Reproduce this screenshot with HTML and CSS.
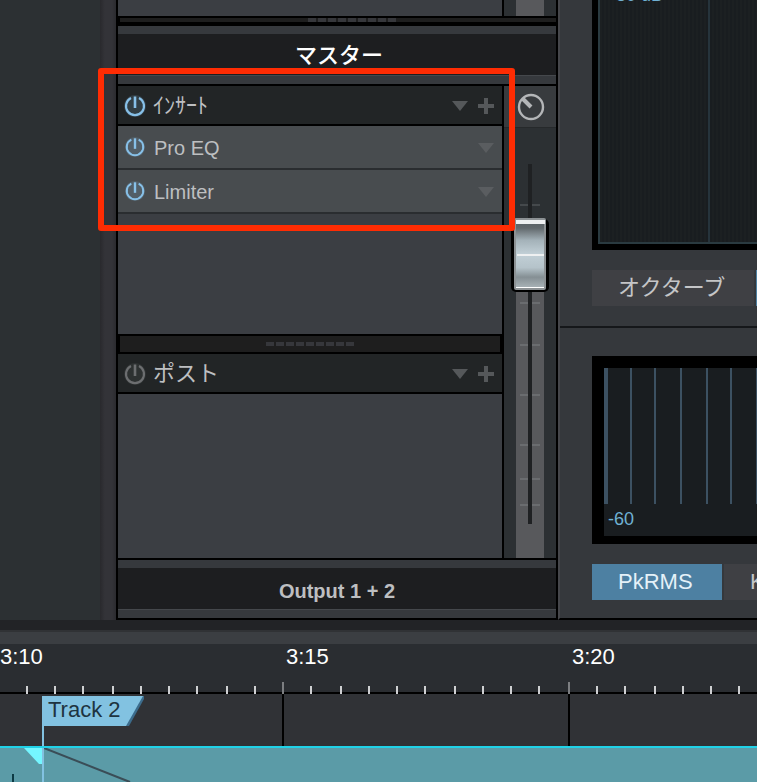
FILE: index.html
```html
<!DOCTYPE html>
<html lang="ja">
<head>
<meta charset="utf-8">
<title>マスター</title>
<link rel="stylesheet" href="styles.css">
</head>
<body>
<svg class="defs" aria-hidden="true">
  <symbol id="power" viewBox="0 0 24 24">
    <circle cx="12" cy="12" r="11" fill="currentColor" opacity=".16"/>
    <path d="M8 4A9 9 0 1 0 16 4" fill="none" stroke="currentColor" stroke-width="2.200"/>
    <path d="M12 2.500V14" fill="none" stroke="currentColor" stroke-width="2.600"/>
  </symbol>
  <symbol id="arrow" viewBox="0 0 16 10"><path d="M0 0H16L8 10Z" fill="currentColor"/></symbol>
  <symbol id="plus" viewBox="0 0 16 16"><path d="M6 0H10V6H16V10H10V16H6V10H0V6H6Z" fill="currentColor"/></symbol>
  <symbol id="grip" viewBox="0 0 88 4"><path d="M0 2H88" fill="none" stroke="currentColor" stroke-width="4" stroke-dasharray="8 2"/></symbol>
</svg>
<div class="app">
  <main class="mixer">
    <div class="gutter"></div>
    <div class="edge"></div>
    <section class="channel">
      <div class="stub"><div class="stub-list"></div><div class="stub-meter"></div></div>
      <div class="splitter thin"><svg class="grip"><use href="#grip"/></svg></div>
      <h1 class="name title">マスター</h1>
      <div class="strip">
        <div class="racks">
          <div class="rack-head">
            <button class="icon on" aria-label="ｲﾝｻｰﾄ"><svg class="power"><use href="#power"/></svg></button>
            <h2>ｲﾝｻｰﾄ</h2>
            <button class="icon dim" aria-label="▼"><svg class="arrow"><use href="#arrow"/></svg></button>
            <button class="icon dim" aria-label="+"><svg class="plus"><use href="#plus"/></svg></button>
          </div>
          <ul class="slots">
            <li><button class="icon on" aria-label="Pro EQ"><svg class="power small"><use href="#power"/></svg></button><span>Pro EQ</span><button class="icon faint" aria-label="▼"><svg class="arrow"><use href="#arrow"/></svg></button></li>
            <li><button class="icon on" aria-label="Limiter"><svg class="power small"><use href="#power"/></svg></button><span>Limiter</span><button class="icon faint" aria-label="▼"><svg class="arrow"><use href="#arrow"/></svg></button></li>
          </ul>
          <div class="space"></div>
          <div class="splitter"><svg class="grip"><use href="#grip"/></svg></div>
          <div class="rack-head">
            <button class="icon off" aria-label="ポスト"><svg class="power"><use href="#power"/></svg></button>
            <h2>ポスト</h2>
            <button class="icon dim" aria-label="▼"><svg class="arrow"><use href="#arrow"/></svg></button>
            <button class="icon dim" aria-label="+"><svg class="plus"><use href="#plus"/></svg></button>
          </div>
          <div class="space tall"></div>
        </div>
        <div class="fader-col">
          <div class="pan"><svg width="28" height="28" viewBox="0 0 28 28"><circle cx="14" cy="14" r="12" fill="none" stroke="#b4b6b8" stroke-width="2.400"/><path d="M6 6L14 14" stroke="#b4b6b8" stroke-width="4"/></svg></div>
          <svg class="fader" width="52" height="430" viewBox="0 0 52 430">
            <defs>
              <linearGradient id="cap" x1="0" y1="0" x2="0" y2="1">
                <stop offset="0" stop-color="#555e62"/><stop offset=".12" stop-color="#62696d"/><stop offset=".3" stop-color="#a4b2b9"/>
                <stop offset=".5" stop-color="#c1cfd6"/><stop offset=".7" stop-color="#b5c3ca"/><stop offset=".84" stop-color="#858f94"/><stop offset="1" stop-color="#aab4b8"/>
              </linearGradient>
            </defs>
            <rect x="12" y="162" width="28" height="268" fill="#58595c"/>
            <rect x="24" y="36" width="4" height="360" fill="#1f2123"/>
            <g fill="#6a6c6f">
              <path d="M16 76h8v2h-8zM28 76h8v2h-8z" fill="#45494c"/>
              <path d="M16 174h8v2h-8zM28 174h8v2h-8zM16 216h8v2h-8zM28 216h8v2h-8zM16 266h8v2h-8zM28 266h8v2h-8zM16 316h8v2h-8zM28 316h8v2h-8zM16 350h8v2h-8zM28 350h8v2h-8zM16 376h8v2h-8zM28 376h8v2h-8z"/>
            </g>
            <rect x="7" y="91" width="38" height="73" rx="5" fill="#000"/>
            <rect x="10" y="90" width="32" height="72" rx="2" fill="#8c9194"/>
            <rect x="12" y="92" width="28" height="68" fill="url(#cap)"/>
            <path d="M12 92H41V96H12ZM13 126H40V128H13Z" fill="#eef0f1"/>
            <path d="M12 159H40V160H12Z" fill="#fff"/>
          </svg>
        </div>
        <div class="highlight"></div>
      </div>
      <div class="name output">Output 1 + 2</div>
    </section>
    <aside class="analysis">
      <div class="panel spectrum">
        <div class="screen grid"><span class="scale">-80 dB</span></div>
        <div class="tabs"><button class="tab wide">オクターブ</button><button class="tab active"></button></div>
      </div>
      <div class="panel level">
        <div class="screen bars">
          <svg class="lines" height="136"><path d="M0 0h4v136h-4zM26 0h2v136h-2zM50 0h2v136h-2zM76 0h2v136h-2zM102 0h2v136h-2zM126 0h2v136h-2zM152 0h2v136h-2z" fill="#3c5162"/></svg>
          <span class="scale">-60</span>
        </div>
        <div class="tabs"><button class="tab active">PkRMS</button><button class="tab">K</button></div>
      </div>
    </aside>
  </main>
  <section class="timeline">
    <div class="bar"></div>
    <div class="ruler">
      <div class="times"><span>3:10</span><span>3:15</span><span>3:20</span></div>
      <svg class="ticks" height="12"><path d="M26 4h2v8h-2zM54 4h2v8h-2zM82 4h2v8h-2zM112 4h2v8h-2zM140 4h2v8h-2zM168 4h2v8h-2zM196 4h2v8h-2zM226 4h2v8h-2zM254 4h2v8h-2zM310 4h2v8h-2zM340 4h2v8h-2zM368 4h2v8h-2zM396 4h2v8h-2zM424 4h2v8h-2zM454 4h2v8h-2zM482 4h2v8h-2zM510 4h2v8h-2zM538 4h2v8h-2zM596 4h2v8h-2zM624 4h2v8h-2zM654 4h2v8h-2zM682 4h2v8h-2zM710 4h2v8h-2zM738 4h2v8h-2z" fill="#cfd0d2"/><path d="M282 0h2v12h-2zM568 0h2v12h-2z" fill="#7c7e81"/></svg>
    </div>
    <div class="markers">
      <svg class="beats" height="52"><path d="M282 0h2v52h-2zM568 0h2v52h-2z" fill="#000"/></svg>
      <div class="flag"><svg width="102" height="52" viewBox="0 0 102 52"><path d="M0 2H102L85 32H2V52H0Z" fill="#82c2e1"/><path d="M102 2V5L87 32H84L101 2Z" fill="#3c6c8c"/></svg><span>Track 2</span></div>
    </div>
    <svg class="clip"><path d="M24 0H42V16H39Z" fill="#75f6ff"/><path d="M44 0L130 34" stroke="#3a4d57" stroke-width="2"/><path d="M42 0h2v34h-2z" fill="#82c2e1"/><path d="M12 26h2v8h-2z" fill="#0c3a44"/></svg>
  </section>
</div>
</body>
</html>
```
FILE: styles.css
```css
* { box-sizing: border-box; }
body {
  margin: 0;
  background: #222326;
  color: #bdbfc1;
  font-family: "Liberation Sans", "Noto Sans CJK JP", sans-serif;
  font-size: 22px;
}
h1, h2, ul { margin: 0; padding: 0; font-weight: 400; list-style: none; }
button { border: 0; padding: 0; background: none; color: inherit; font: inherit; }
svg { display: block; }
.defs { width: 0; height: 0; position: absolute; }

.app { display: flex; flex-direction: column; min-height: 100vh; overflow: hidden; }
.mixer { display: flex; }
.gutter { flex: 0 0 100px; background: #2c3033; }
.edge { flex: 0 0 16px; background: linear-gradient(90deg, #29292d, #333338 30%, #333338 75%, #2b2b2f); }

.channel {
  flex: 0 0 442px;
  border: solid #000;
  border-width: 0 2px 2px;
  background: #000;
}
.stub { display: flex; gap: 2px; height: 16px; }
.stub-list { flex: 1; background: #3b3e43; }
.stub-meter { width: 52px; border: solid #2c3033; border-width: 0 12px; background: #58595c; }

.splitter {
  display: flex;
  align-items: center;
  justify-content: center;
  height: 20px;
  border: 2px solid #000;
  background: #1e1e1e;
}
.splitter.thin { height: 10px; padding-left: 28px; border-width: 2px 0 4px 2px; }
.grip { width: 88px; height: 4px; color: #36373b; }

.name {
  height: 58px;
  border: solid #36393d;
  border-width: 8px 0;
  background: #1d1e20;
  box-shadow: inset 0 -1px #45484c;
  text-align: center;
}
.title { padding-left: 4px; color: #fff; font-size: 22px; font-weight: 500; line-height: 44px; }
.output { color: #bdbfc1; font-size: 20px; font-weight: 700; line-height: 46px; }

.strip { position: relative; display: flex; gap: 2px; padding: 2px 0; }
.racks { flex: 1; }
.rack-head {
  display: flex;
  align-items: center;
  height: 40px;
  padding: 2px 8px 0 5px;
  border: solid #000;
  border-width: 0 0 2px;
  background: #222526;
}
.rack-head h2 { flex: 1; margin-left: 6px; font-size: 22px; line-height: 36px; }
.rack-head .dim + .dim { margin-left: 10px; }
.slots li {
  display: flex;
  align-items: center;
  height: 44px;
  padding: 0 8px 0 6px;
  border-bottom: 2px solid #2a2d30;
  background: #484c4f;
}
.slots span { flex: 1; margin-left: 8px; padding-top: 2px; font-size: 20px; }
.slots .arrow { margin-top: 2px; }
.icon.on { color: #87c0e8; }
.icon.off { color: #6c6e70; }
.icon.dim { color: #55585a; }
.icon.faint { color: #5a5d60; }
.power { width: 24px; height: 24px; }
.power.small { width: 22px; height: 22px; }
.arrow { width: 16px; height: 10px; }
.plus { width: 16px; height: 16px; }
.space { height: 120px; background: #3b3e43; }
.space.tall { height: 164px; }

.fader-col { width: 52px; background: #2c3033; }
.pan { display: grid; place-items: center; height: 42px; padding-left: 2px; background: #383b3e; border-bottom: 1px solid #26292b; }
.highlight {
  position: absolute;
  inset: -16px 41px auto -20px;
  height: 163px;
  border: 6px solid #ff2c03;
  border-radius: 3px;
}

.analysis { flex: 1; min-width: 0; border-left: 2px solid #45464a; border-bottom: 2px solid #000; background: #35383c; }
.panel { overflow: hidden; padding-left: 32px; }
.spectrum { height: 328px; border-bottom: 2px solid #15171a; }
.screen { overflow: hidden; border: solid #000; background: #191d20; color: #6fb1d3; font-size: 18px; }
.grid {
  position: relative;
  height: 250px;
  border-width: 0 0 6px 6px;
  background:
    linear-gradient(#26343c, #26343c) 110px 0 / 2px 100% no-repeat,
    repeating-linear-gradient(90deg, transparent 0 2px, #1c2022 2px 4px),
    #191d20;
  box-shadow: inset 2px -2px #2a3a40;
}
.grid .scale { position: absolute; left: 12px; bottom: 238px; }
.bars { height: 188px; margin-top: 28px; border-width: 12px 0 8px 12px; }
.bars .scale { display: block; padding-left: 4px; line-height: 30px; }
.lines, .ticks { width: 100%; }
.tabs { display: flex; gap: 2px; margin: 20px 0 18px; }
.tab { flex: none; height: 36px; min-width: 130px; padding: 0 26px; background: #3f4044; color: #c4c5c7; line-height: 34px; text-align: left; }
.tab.wide { min-width: 162px; }
.tab.active { background: #4d80a2; color: #e4f1f8; }

.timeline { flex: 1; display: flex; flex-direction: column; }
.bar { height: 24px; border-bottom: 12px solid #3b3e42; box-shadow: inset 0 -2px #303235; }
.ruler { height: 50px; border-bottom: 2px solid #000; background: #2a2d31; color: #fff; font-size: 22px; }
.times { display: flex; height: 38px; line-height: 26px; }
.times span { flex: 0 0 286px; }
.markers { display: grid; height: 52px; background: #303236; }
.markers > * { grid-area: 1 / 1; }
.beats { width: 100%; }
.flag { display: grid; justify-self: start; margin-left: 42px; color: #1e3440; }
.flag > * { grid-area: 1 / 1; }
.flag span { padding-left: 6px; line-height: 32px; }
.clip { flex: 1; width: 100%; height: 36px; border-top: 2px solid #20d2e8; background: #5b9ba7; }
```
